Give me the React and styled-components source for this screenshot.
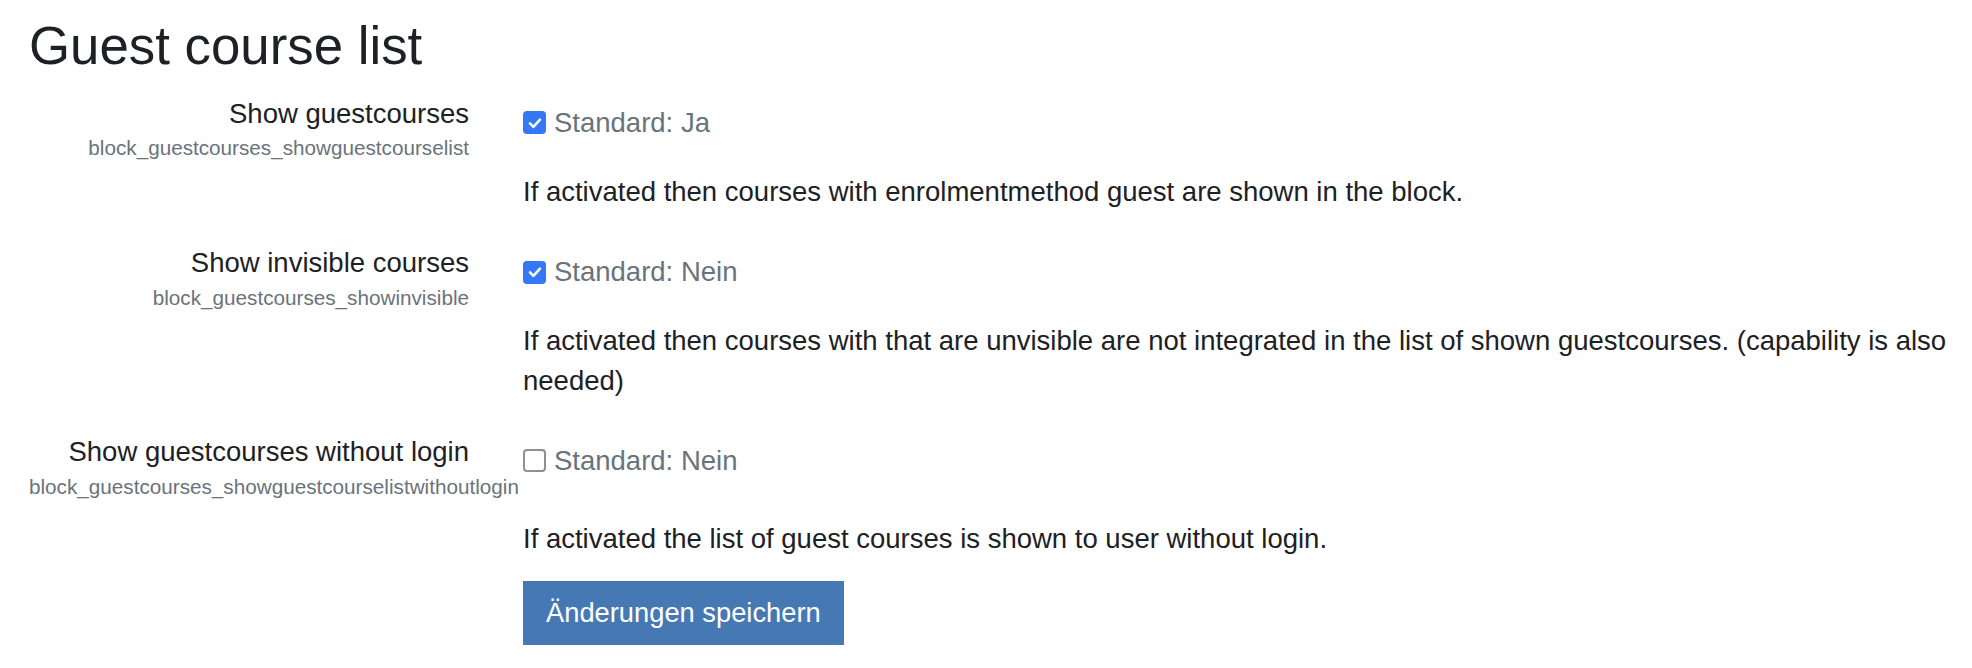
import React from 'react';
import styled, { createGlobalStyle } from 'styled-components';

const GlobalStyle = createGlobalStyle`
  html, body {
    margin: 0;
    padding: 0;
    background: #fff;
  }
  body {
    font-family: "Liberation Sans", Arial, sans-serif;
    color: #1d2125;
  }
`;

const Page = styled.div`
  padding: 14px 0 20px 29px;
`;

const Title = styled.h2`
  margin: 0 0 17px;
  font-size: 52.8px;
  line-height: 63px;
  font-weight: 300;
  color: #1d2125;
`;

const Row = styled.div`
  display: grid;
  grid-template-columns: 440px 1fr;
  column-gap: 54px;
  & + & {
    margin-top: 32px;
  }
`;

const LabelCol = styled.div`
  text-align: right;
  min-width: 0;
`;

const Label = styled.label`
  display: block;
  font-size: 27.5px;
  line-height: 39.4px;
  color: #1d2125;
`;

const ShortName = styled.span`
  display: block;
  margin-top: 4px;
  font-size: 20.7px;
  line-height: 22px;
  color: #6a737b;
  white-space: nowrap;
`;

const SettingCol = styled.div`
  padding-top: 9px;
`;

const CheckLine = styled.div`
  display: flex;
  align-items: center;
  gap: 8px;
  height: 39.4px;
`;

const Box = styled.span`
  box-sizing: border-box;
  flex: 0 0 23px;
  display: inline-flex;
  align-items: center;
  justify-content: center;
  width: 23px;
  height: 23px;
  border-radius: 4px;
  background: ${p => (p.$checked ? '#3478f6' : '#fff')};
  border: ${p => (p.$checked ? 'none' : '2.5px solid #8e8e93')};
`;

const DefaultInfo = styled.span`
  font-size: 27.5px;
  line-height: 39.4px;
  color: #6a737b;
`;

const Description = styled.p`
  margin: ${p => p.$gap}px 0 0;
  font-size: 27.5px;
  line-height: 39.4px;
  color: #1d2125;
`;

const Actions = styled.div`
  display: grid;
  grid-template-columns: 440px 1fr;
  column-gap: 54px;
  margin-top: 22.6px;
`;

const SaveButton = styled.button`
  grid-column: 2;
  justify-self: start;
  font-family: "Liberation Sans", Arial, sans-serif;
  font-size: 27.3px;
  line-height: 39.4px;
  padding: 11px 22px;
  color: #fff;
  background: #4679b3;
  border: 1.75px solid #4679b3;
  border-radius: 0;
  cursor: pointer;
`;

const Checkbox = ({ checked }) => (
  <Box $checked={checked}>
    {checked && (
      <svg width="16" height="16" viewBox="0 0 16 16">
        <path
          d="M3 8.4 L6.4 11.8 L13 4.6"
          fill="none"
          stroke="#fff"
          strokeWidth="2.6"
          strokeLinecap="round"
          strokeLinejoin="round"
        />
      </svg>
    )}
  </Box>
);

const settings = [
  {
    label: 'Show guestcourses',
    name: 'block_guestcourses_showguestcourselist',
    checked: true,
    def: 'Ja',
    desc: 'If activated then courses with enrolmentmethod guest are shown in the block.',
    gap: 29.6,
  },
  {
    label: 'Show invisible courses',
    name: 'block_guestcourses_showinvisible',
    checked: true,
    def: 'Nein',
    desc: 'If activated then courses with that are unvisible are not integrated in the list of shown guestcourses. (capability is also needed)',
    gap: 29.6,
  },
  {
    label: 'Show guestcourses without login',
    name: 'block_guestcourses_showguestcourselistwithoutlogin',
    checked: false,
    def: 'Nein',
    desc: 'If activated the list of guest courses is shown to user without login.',
    gap: 38.6,
  },
];

export default function App() {
  return (
    <Page>
      <GlobalStyle />
      <Title>Guest course list</Title>
      {settings.map(s => (
        <Row key={s.name}>
          <LabelCol>
            <Label>{s.label}</Label>
            <ShortName>{s.name}</ShortName>
          </LabelCol>
          <SettingCol>
            <CheckLine>
              <Checkbox checked={s.checked} />
              <DefaultInfo>Standard: {s.def}</DefaultInfo>
            </CheckLine>
            <Description $gap={s.gap}>{s.desc}</Description>
          </SettingCol>
        </Row>
      ))}
      <Actions>
        <SaveButton type="button">Änderungen speichern</SaveButton>
      </Actions>
    </Page>
  );
}
